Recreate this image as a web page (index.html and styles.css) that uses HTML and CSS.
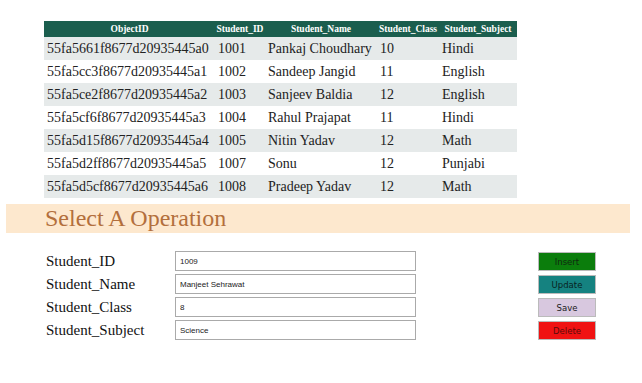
FILE: index.html
```html
<!DOCTYPE html>
<html>
<head>
    <title>Student Records</title>
    <link rel="stylesheet" href="styles.css">
</head>
<body>
    <div class="table-wrap">
        <table class="records">
            <thead>
                <tr>
                    <th class="col-id">ObjectID</th>
                    <th class="col-sid">Student_ID</th>
                    <th class="col-name">Student_Name</th>
                    <th class="col-class">Student_Class</th>
                    <th class="col-subject">Student_Subject</th>
                </tr>
            </thead>
            <tbody>
                <tr><td>55fa5661f8677d20935445a0</td><td>1001</td><td>Pankaj Choudhary</td><td>10</td><td>Hindi</td></tr>
                <tr><td>55fa5cc3f8677d20935445a1</td><td>1002</td><td>Sandeep Jangid</td><td>11</td><td>English</td></tr>
                <tr><td>55fa5ce2f8677d20935445a2</td><td>1003</td><td>Sanjeev Baldia</td><td>12</td><td>English</td></tr>
                <tr><td>55fa5cf6f8677d20935445a3</td><td>1004</td><td>Rahul Prajapat</td><td>11</td><td>Hindi</td></tr>
                <tr><td>55fa5d15f8677d20935445a4</td><td>1005</td><td>Nitin Yadav</td><td>12</td><td>Math</td></tr>
                <tr><td>55fa5d2ff8677d20935445a5</td><td>1007</td><td>Sonu</td><td>12</td><td>Punjabi</td></tr>
                <tr><td>55fa5d5cf8677d20935445a6</td><td>1008</td><td>Pradeep Yadav</td><td>12</td><td>Math</td></tr>
            </tbody>
        </table>
    </div>

    <div class="operation-bar">
        <h2>Select A Operation</h2>
    </div>

    <div class="operation">
        <div class="fields">
            <label for="sid">Student_ID</label>
            <input type="text" id="sid" value="1009">
            <label for="sname">Student_Name</label>
            <input type="text" id="sname" value="Manjeet Sehrawat">
            <label for="sclass">Student_Class</label>
            <input type="text" id="sclass" value="8">
            <label for="ssubject">Student_Subject</label>
            <input type="text" id="ssubject" value="Science">
        </div>
        <div class="actions">
            <button class="btn insert">Insert</button>
            <button class="btn update">Update</button>
            <button class="btn save">Save</button>
            <button class="btn delete">Delete</button>
        </div>
    </div>
</body>
</html>
```

FILE: styles.css
```css
body {
    margin: 0;
    background-color: #fff;
    font-family: "Liberation Serif", "Times New Roman", serif;
    color: #222;
}

.table-wrap {
    padding: 21px 0 0 44px;
}

.records {
    border-collapse: collapse;
    table-layout: fixed;
    width: 473px;
}

.records th {
    background-color: #1b5e4e;
    color: #fff;
    font-family: "Liberation Serif", "Times New Roman", serif;
    font-size: 9.5px;
    font-weight: bold;
    height: 16px;
    padding: 0;
    text-align: center;
    white-space: nowrap;
}

.records td {
    font-size: 14px;
    height: 23px;
    padding: 0 0 0 3px;
    white-space: nowrap;
    overflow: hidden;
}

.records tbody tr:nth-child(odd) td {
    background-color: #e6eaea;
}

.col-id { width: 171px; }
.col-sid { width: 50px; }
.col-name { width: 112px; }
.col-class { width: 62px; }
.col-subject { width: 78px; }

.operation-bar {
    margin: 6px 12px 0 6px;
    background-color: #fde8ce;
    height: 29px;
    display: flex;
    align-items: center;
}

.operation-bar h2 {
    margin: 0 0 0 39px;
    font-family: "Liberation Serif", "Times New Roman", serif;
    font-size: 24px;
    font-weight: normal;
    color: #b36f3c;
}

.operation {
    display: flex;
    align-items: flex-start;
    padding: 18px 0 0 46px;
}

.fields {
    display: grid;
    grid-template-columns: 129px 241px;
    row-gap: 3px;
    align-items: center;
}

.fields label {
    font-size: 15px;
    color: #111;
}

.fields input {
    box-sizing: border-box;
    width: 241px;
    height: 20px;
    margin: 0;
    padding: 0 4px;
    border: 1px solid #aaa;
    font-family: "Liberation Sans", Arial, sans-serif;
    font-size: 8px;
    color: #222;
}

.actions {
    display: flex;
    flex-direction: column;
    gap: 4px;
    margin-left: 122px;
    padding-top: 1px;
}

.btn {
    box-sizing: border-box;
    width: 58px;
    height: 19px;
    border: 1px solid #bbb;
    font-family: "DejaVu Sans", sans-serif;
    font-size: 8.5px;
    padding: 0;
}

.insert { background-color: #0b7d0c; color: #0f2a10; }
.update { background-color: #158280; color: #082222; }
.save { background-color: #d8c8df; color: #1a1a1a; }
.delete { background-color: #f01313; color: #5a0c0c; }
```
